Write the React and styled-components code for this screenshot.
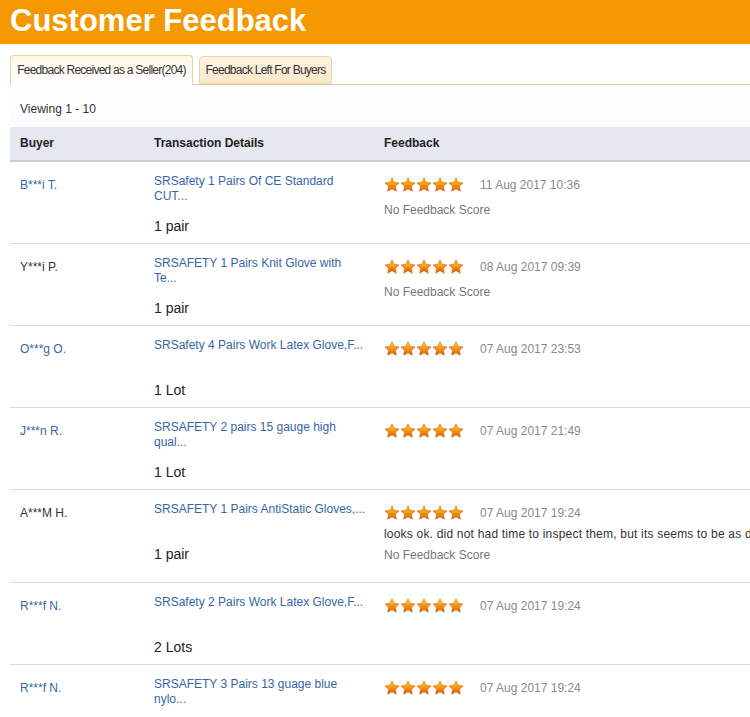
import React from 'react';
import styled, { createGlobalStyle } from 'styled-components';

const GlobalStyle = createGlobalStyle`
  html, body {
    margin: 0;
    padding: 0;
    background: #fff;
    overflow: hidden;
  }
  body {
    font-family: "Liberation Sans", Arial, sans-serif;
    color: #333;
  }
`;

const Page = styled.div`
  width: 750px;
  height: 717px;
  overflow: hidden;
`;

const Header = styled.header`
  height: 44px;
  background: #f39800;
  padding-left: 10px;
  border-bottom: 1px solid #fff6dc;
`;

const Title = styled.h1`
  margin: 0;
  font-size: 31px;
  line-height: 42px;
  font-weight: bold;
  color: #fff;
  white-space: nowrap;
`;

const Content = styled.div`
  width: 810px;
  margin-left: 10px;
`;

const Tabs = styled.div`
  display: flex;
  align-items: flex-end;
  gap: 6px;
  height: 28px;
  padding-top: 11px;
  border-bottom: 1px solid #dccb9c;
  margin-right: -20px;
`;

const Tab = styled.div`
  box-sizing: border-box;
  width: ${p => p.$w}px;
  height: ${p => (p.$active ? 30 : 28)}px;
  margin-bottom: ${p => (p.$active ? -1 : 0)}px;
  border: 1px solid ${p => (p.$active ? '#e6d3a2' : '#ebd6a8')};
  border-bottom: ${p => (p.$active ? 'none' : '1px solid #ebd6a8')};
  border-radius: 4px 4px 0 0;
  background: ${p =>
    p.$active
      ? 'linear-gradient(#fff6e2, #fffdf8 60%, #fff)'
      : 'linear-gradient(#fdf2e0, #fce8cc)'};
  display: flex;
  align-items: center;
  justify-content: center;
  font-size: 12px;
  letter-spacing: -0.75px;
  color: #333;
  white-space: nowrap;
  padding-bottom: ${p => (p.$active ? 2 : 0)}px;
`;

const Toolbar = styled.div`
  display: flex;
  align-items: flex-start;
  justify-content: space-between;
  height: 42px;
  background: linear-gradient(#fff, #fbfcfe);
`;

const Viewing = styled.div`
  margin-top: 16px;
  padding-left: 10px;
  font-size: 12px;
  line-height: 16px;
  color: #333;
`;

const PageBox = styled.div`
  margin-top: 10px;
  width: 66px;
  height: 17px;
  border: 1px solid #aaa;
  background: #fff;
`;

const Table = styled.div`
  width: 810px;
`;

const HeadRow = styled.div`
  display: grid;
  grid-template-columns: 134px 230px 1fr;
  height: 33px;
  background: #e5e8ef;
  border-bottom: 2px solid #c9ccd3;
`;

const HeadCell = styled.div`
  padding: 0 10px;
  line-height: 33px;
  font-size: 12px;
  font-weight: bold;
  color: #222;
`;

const Row = styled.div`
  display: grid;
  grid-template-columns: 134px 230px 1fr;
  border-bottom: 1px solid #dcdcdc;
`;

const BuyerCell = styled.div`
  padding: 13px 10px;
  font-size: 12px;
  line-height: 20px;
  color: ${p => (p.$link ? '#3566a8' : '#333')};
`;

const DetailCell = styled.div`
  padding: 12px 10px 7px;
`;

const ItemLink = styled.div`
  height: 30px;
  font-size: 12px;
  line-height: 15px;
  color: #3566a8;
  white-space: nowrap;
`;

const Qty = styled.div`
  margin-top: 12px;
  font-size: 14px;
  line-height: 20px;
  color: #222;
`;

const FeedbackCell = styled.div`
  padding: 13px 10px 17px;
  font-size: 12px;
  white-space: nowrap;
  overflow: hidden;
`;

const RatingLine = styled.div`
  display: flex;
  align-items: center;
  height: 20px;
  gap: 16px;
`;

const Stars = styled.div`
  display: flex;
`;

const DateText = styled.span`
  color: #8a8a8a;
  font-size: 12px;
`;

const Comment = styled.div`
  margin-top: 1px;
  margin-bottom: -4px;
  line-height: 20px;
  color: #333;
  letter-spacing: 0.2px;
`;

const NoScore = styled.div`
  margin-top: 5px;
  line-height: 20px;
  color: #777;
`;

const Star = ({ id }) => (
  <svg width="16" height="16" viewBox="0 0 24 24">
    <defs>
      <linearGradient id={id} x1="0" y1="0" x2="0" y2="1">
        <stop offset="0" stopColor="#ffd54a" />
        <stop offset="0.45" stopColor="#fb9a14" />
        <stop offset="1" stopColor="#d9580a" />
      </linearGradient>
    </defs>
    <path
      d="M12 1.2l3.2 6.7 7.3 1-5.3 5.1 1.3 7.3L12 17.8l-6.5 3.5 1.3-7.3L1.5 8.9l7.3-1z"
      fill={`url(#${id})`}
      stroke="#c8650e"
      strokeWidth="0.9"
      strokeLinejoin="round"
    />
  </svg>
);

const rows = [
  { buyer: 'B***i T.', link: true, title: ['SRSafety 1 Pairs Of CE Standard', 'CUT...'], qty: '1 pair', date: '11 Aug 2017 10:36', noScore: true },
  { buyer: 'Y***i P.', link: false, title: ['SRSAFETY 1 Pairs Knit Glove with', 'Te...'], qty: '1 pair', date: '08 Aug 2017 09:39', noScore: true },
  { buyer: 'O***g O.', link: true, title: ['SRSafety 4 Pairs Work Latex Glove,F...'], qty: '1 Lot', date: '07 Aug 2017 23:53' },
  { buyer: 'J***n R.', link: true, title: ['SRSAFETY 2 pairs 15 gauge high', 'qual...'], qty: '1 Lot', date: '07 Aug 2017 21:49' },
  { buyer: 'A***M H.', link: false, title: ['SRSAFETY 1 Pairs AntiStatic Gloves,...'], qty: '1 pair', date: '07 Aug 2017 19:24', comment: 'looks ok. did not had time to inspect them, but its seems to be as d', noScore: true },
  { buyer: 'R***f N.', link: true, title: ['SRSafety 2 Pairs Work Latex Glove,F...'], qty: '2 Lots', date: '07 Aug 2017 19:24' },
  { buyer: 'R***f N.', link: true, title: ['SRSAFETY 3 Pairs 13 guage blue', 'nylo...'], qty: '1 Lot', date: '07 Aug 2017 19:24' },
];

const App = () => (
  <Page>
    <GlobalStyle />
    <Header>
      <Title>Customer Feedback</Title>
    </Header>
    <Content>
      <Tabs>
        <Tab $active $w={183}>Feedback Received as a Seller(204)</Tab>
        <Tab $w={133}>Feedback Left For Buyers</Tab>
      </Tabs>
      <Toolbar>
        <Viewing>Viewing 1 - 10</Viewing>
        <PageBox />
      </Toolbar>
      <Table>
        <HeadRow>
          <HeadCell>Buyer</HeadCell>
          <HeadCell>Transaction Details</HeadCell>
          <HeadCell>Feedback</HeadCell>
        </HeadRow>
        {rows.map((r, i) => (
          <Row key={i}>
            <BuyerCell $link={r.link}>{r.buyer}</BuyerCell>
            <DetailCell>
              <ItemLink>
                {r.title.map((t, j) => (
                  <div key={j}>{t}</div>
                ))}
              </ItemLink>
              <Qty>{r.qty}</Qty>
            </DetailCell>
            <FeedbackCell>
              <RatingLine>
                <Stars>
                  {[0, 1, 2, 3, 4].map(s => (
                    <Star key={s} id={`star-${i}-${s}`} />
                  ))}
                </Stars>
                <DateText>{r.date}</DateText>
              </RatingLine>
              {r.comment && <Comment>{r.comment}</Comment>}
              {r.noScore && <NoScore>No Feedback Score</NoScore>}
            </FeedbackCell>
          </Row>
        ))}
      </Table>
    </Content>
  </Page>
);

export default App;
